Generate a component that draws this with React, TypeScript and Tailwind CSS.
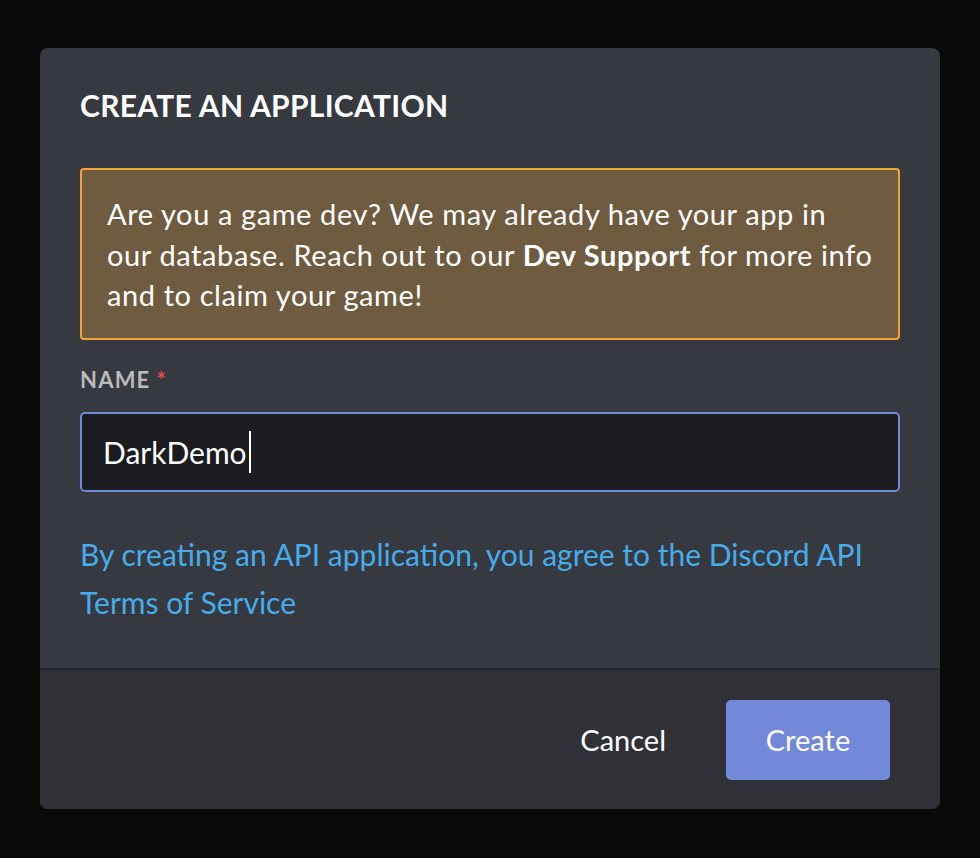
import React from "react";

export default function App() {
  return (
    <div
      className="min-h-screen w-full bg-[#090a0a] pt-[48px] pl-[40px]"
      style={{ fontFamily: "Lato, 'Open Sans', sans-serif" }}
    >
      <div className="w-[900px] h-[761px] rounded-[8px] overflow-hidden bg-[#36393f] flex flex-col">
        <div className="flex-1 px-[40px] pt-[40px]">
          <h1 className="text-[30px] leading-[34px] font-bold text-white tracking-[0.3px]">
            CREATE AN APPLICATION
          </h1>
          <div className="mt-[46px] h-[172px] rounded-[4px] border-2 border-[#f0a232] bg-[#6e5b40] px-[25px] py-[24px] text-[29px] leading-[40.5px] tracking-[0.6px] text-white whitespace-nowrap">
            Are you a game dev? We may already have your app in
            <br />
            our database. Reach out to our <span className="font-bold">Dev Support</span> for more info
            <br />
            and to claim your game!
          </div>
          <div className="mt-[28px] flex items-center gap-[6px] text-[22px] leading-[24px] font-bold">
            <span className="text-[#b9bbbe] tracking-[1.2px]">NAME</span>
            <span className="text-[#f04747]">*</span>
          </div>
          <div className="mt-[20px] h-[80px] rounded-[5px] border-2 border-[#7289da] bg-[#1b1c1f] flex items-center pl-[21px]">
            <span className="text-[30px] text-white">DarkDemo</span>
            <span className="ml-[2px] w-[2px] h-[42px] bg-white" />
          </div>
          <p className="mt-[38px] text-[30px] leading-[48px] text-[#46acec] whitespace-nowrap">
            By creating an API application, you agree to the Discord API
            <br />
            Terms of Service
          </p>
        </div>
        <div className="h-[141px] shrink-0 border-t-2 border-[#26272b] bg-[#2f3136] flex items-center justify-end pr-[50px] gap-[60px]">
          <span className="text-[29px] text-white">Cancel</span>
          <button className="w-[164px] h-[80px] rounded-[5px] bg-[#7289da] text-[29px] text-white">
            Create
          </button>
        </div>
      </div>
    </div>
  );
}
